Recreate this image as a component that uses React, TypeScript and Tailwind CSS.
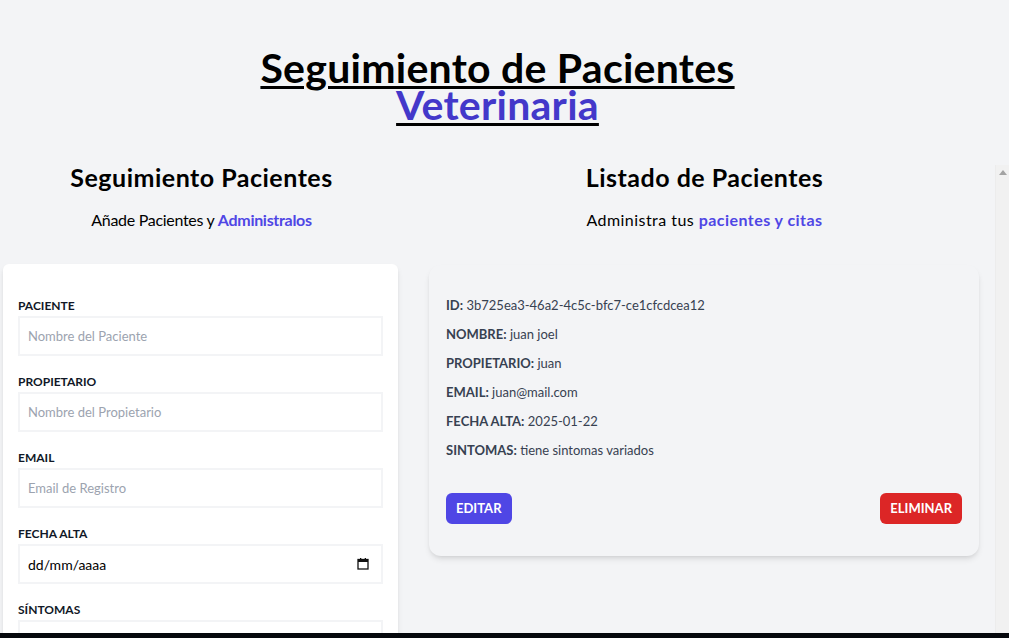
import React from "react";

const font = { fontFamily: "Lato, 'Noto Sans', sans-serif" };

function Field({ label, placeholder }: { label: string; placeholder: string }) {
  return (
    <div className="mb-4">
      <label className="block text-[12px] leading-[20px] font-bold uppercase text-[#111827]">{label}</label>
      <input
        type="text"
        placeholder={placeholder}
        className="block w-full h-[40px] border-2 border-[#f3f4f6] px-[8px] text-[13px] placeholder-[#9ca3af] outline-none bg-white"
      />
    </div>
  );
}

function Row({ k, v }: { k: string; v: string }) {
  return (
    <p className="text-[13px] leading-[20px] text-[#374151]">
      <span className="font-bold">{k}:</span> {v}
    </p>
  );
}

export default function App() {
  return (
    <div className="h-[638px] flex flex-col bg-[#f3f4f6] overflow-hidden" style={font}>
      <div className="flex-1 overflow-hidden">
        <h1 className="pt-[49px] pr-[14px] text-center text-[41px] leading-[37px] font-bold tracking-[0.25px] text-black underline decoration-[3px] underline-offset-[3px]">
          Seguimiento de Pacientes
          <br />
          <span className="text-[#4338ca]">Veterinaria</span>
        </h1>

        <div className="mt-[42px] flex">
          <div className="w-[403px] shrink-0">
            <h2 className="text-center text-[25px] leading-[24px] font-bold tracking-[0.5px] text-black">Seguimiento Pacientes</h2>
            <p className="mt-[19px] text-center text-[16px] leading-[24px] tracking-[-0.3px] text-black">
              Añade Pacientes y <span className="text-[#4f46e5] font-bold">Administralos</span>
            </p>
            <form className="mt-[32px] ml-[3px] mr-[5px] bg-white rounded-md shadow-md px-[15px] pt-[32px] pb-10">
              <Field label="Paciente" placeholder="Nombre del Paciente" />
              <Field label="Propietario" placeholder="Nombre del Propietario" />
              <Field label="Email" placeholder="Email de Registro" />
              <div className="mb-4">
                <label className="block text-[12px] leading-[20px] font-bold uppercase text-[#111827]">Fecha Alta</label>
                <div className="flex items-center justify-between w-full h-[40px] border-2 border-[#f3f4f6] pl-[8px] pr-[12px] text-[14px] text-black">
                  <span>dd/mm/aaaa</span>
                  <svg width="12" height="12" viewBox="0 0 12 12" fill="none">
                    <rect x="1" y="1.5" width="10" height="9.5" stroke="#111" strokeWidth="1.3" />
                    <rect x="1" y="1.5" width="10" height="2.5" fill="#111" />
                    <rect x="3" y="0" width="1.3" height="2" fill="#111" />
                    <rect x="7.7" y="0" width="1.3" height="2" fill="#111" />
                  </svg>
                </div>
              </div>
              <div className="mb-4">
                <label className="block text-[12px] leading-[20px] font-bold uppercase text-[#111827]">Síntomas</label>
                <textarea className="block w-full h-[80px] border-2 border-[#f3f4f6] p-2 text-[13px] outline-none" placeholder="Describe los Síntomas" />
              </div>
            </form>
          </div>

          <div className="ml-[11px] flex-1 h-[638px] flex">
            <div className="flex-1">
              <h2 className="text-center text-[25px] leading-[24px] font-bold tracking-[0.5px] text-black">Listado de Pacientes</h2>
              <p className="mt-[19px] text-center text-[16px] leading-[24px] tracking-[0.45px] text-black">
                Administra tus <span className="text-[#4f46e5] font-bold">pacientes y citas</span>
              </p>
              <div className="mt-[33px] ml-[15px] mr-[16px] bg-[#f3f4f6] rounded-xl shadow-md px-[17px] pt-[30px] pb-[32px]">
                <div className="flex flex-col gap-[9px]">
                  <Row k="ID" v="3b725ea3-46a2-4c5c-bfc7-ce1cfcdcea12" />
                  <Row k="NOMBRE" v="juan joel" />
                  <Row k="PROPIETARIO" v="juan" />
                  <Row k="EMAIL" v="juan@mail.com" />
                  <Row k="FECHA ALTA" v="2025-01-22" />
                  <Row k="SINTOMAS" v="tiene sintomas variados" />
                </div>
                <div className="mt-[33px] flex justify-between">
                  <button className="h-[31px] px-[10px] rounded-md bg-[#4f46e5] text-white text-[13px] font-bold uppercase">Editar</button>
                  <button className="h-[31px] px-[10px] rounded-md bg-[#dc2626] text-white text-[13px] font-bold uppercase">Eliminar</button>
                </div>
              </div>
            </div>
            <div className="w-[14px] shrink-0 bg-[#f1f1f1] border-l border-[#ececec] flex justify-center pt-[5px]">
              <svg width="8" height="5" viewBox="0 0 8 5">
                <polygon points="4,0 8,5 0,5" fill="#a3a3a3" />
              </svg>
            </div>
          </div>
        </div>
      </div>
      <div className="h-[5px] shrink-0 bg-[#05080c]" />
    </div>
  );
}
